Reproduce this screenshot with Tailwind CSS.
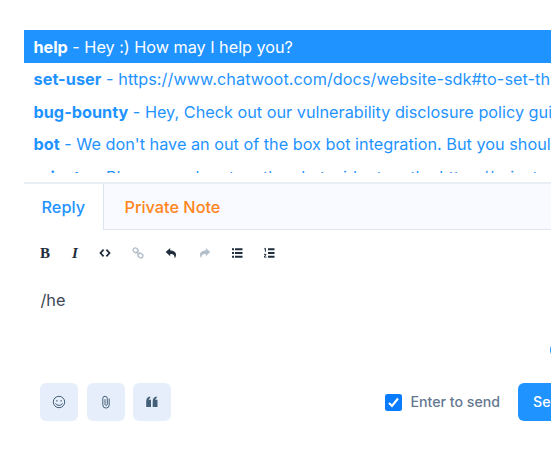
<!DOCTYPE html>
<html lang="en">
<head>
<meta charset="utf-8">
<title>Reply editor</title>
<script src="https://cdn.jsdelivr.net/npm/@tailwindcss/browser@4"></script>
</head>
<body class="bg-white w-[551px] h-[452px] overflow-hidden font-['Inter',sans-serif] text-[16.25px]">
<main class="relative ml-6 w-[527px] h-[452px] pt-[30px] flex flex-col overflow-hidden">
  <ul class="h-[143px] shrink-0 overflow-hidden whitespace-nowrap text-[#1f93ff] [font-feature-settings:'calt'_0]">
    <li class="h-[33px] pl-[9.5px] leading-[34px] bg-[#1f93ff] text-white tracking-[-0.03px]"><b class="font-bold">help</b> - Hey :) How may I help you?</li>
    <li class="h-[32.5px] pl-[9.5px] leading-[32.5px] tracking-[0.05px]"><b class="font-bold">set-user</b> - https://www.chatwoot.com/docs/website-sdk#to-set-th</li>
    <li class="h-[32.5px] pl-[9.5px] leading-[32.5px]"><b class="font-bold">bug-bounty</b> - Hey, Check out our vulnerability disclosure policy gui</li>
    <li class="h-[32.5px] pl-[9.5px] leading-[32.5px]"><b class="font-bold">bot</b> - We don't have an out of the box bot integration. But you shoul</li>
    <li class="h-[32.5px] pl-[9.5px] leading-[32.5px]"><b class="font-bold">private</b> - Please reach out on the chat widget on the https://privat</li>
  </ul>
  <nav class="mt-[9px] h-12 shrink-0 flex border-t-2 border-[#e9eff5] font-medium text-[16.3px] leading-[46px]">
    <div class="w-20 pl-[17.5px] border-r border-[#dde6ef] text-[#1f93ff]">Reply</div>
    <div class="flex-1 pl-[20.5px] bg-[#f8faff] border-b border-[#dfe6ee] text-[#ff851b]">Private Note</div>
  </nav>
  <div class="h-[46px] mb-px shrink-0 flex items-center pl-4 text-[#1f2d3d]">
    <span class="w-[32px] leading-4 font-['Liberation_Serif',serif] font-bold text-[15px]">B</span>
    <span class="w-[27px] leading-4 font-['Liberation_Serif',serif] font-bold italic text-[15px]">I</span>
    <svg class="w-3 h-3 mr-[21px]" viewBox="0 0 12 12" fill="none" stroke="currentColor" stroke-width="1.8"><path d="M4.6 2.7 1.5 6l3.1 3.3M7.4 2.7 10.5 6 7.4 9.3"/></svg>
    <svg class="w-3 h-3 mr-[21px] text-[#b4bfcc]" viewBox="0 0 12 12" fill="none" stroke="currentColor" stroke-width="1.4"><rect x="1" y="1.2" width="5.2" height="4.2" rx="2.1" transform="rotate(35 3.6 3.3)"/><rect x="5.8" y="6.4" width="5.2" height="4.2" rx="2.1" transform="rotate(35 8.4 8.5)"/><path d="m4.6 4.4 2.8 3"/></svg>
    <svg class="w-3 h-3 mr-[22px]" viewBox="0 0 12 12" fill="currentColor"><path d="M.7 5 5.200 1v2.500c3.800 0 6 1.800 5.800 4.500 0 1.400-.7 2.600-1.500 3.200.5-2.600-.8-4.100-4.300-4.100v2.100z"/></svg>
    <svg class="w-3 h-3 mr-5 text-[#b4bfcc]" viewBox="0 0 12 12" fill="currentColor"><path d="M11.3 5 6.800 1v2.500C3 3.500.8 5.300 1 8c0 1.400.7 2.600 1.500 3.200C2 8.600 3.300 7.100 6.800 7.100v2.100z"/></svg>
    <svg class="w-3 h-3 mr-5" viewBox="0 0 12 12" fill="currentColor"><path d="M1 1.200h2v2H1zM4 1.200h7.500v2H4zM1 5h2v2H1zM4 5h7.500v2H4zM1 8.700h2v2H1zM4 8.700h7.500v2H4z"/></svg>
    <svg class="w-3 h-3" viewBox="0 0 12 12" fill="currentColor"><path d="M5 1.200h6.500v2H5zM5 5h6.500v2H5zM5 8.700h6.500v2H5z"/><path d="M1.200 2 2.400 1.300v3.500M1 7.300h2L1.200 10.100h2.300" fill="none" stroke="currentColor"/></svg>
  </div>
  <div class="h-[106px] shrink-0 pl-[16.5px] pt-[13px] leading-[20px] text-[16.3px] text-[#3c4858]">/he</div>
  <footer class="flex items-center h-[38px] shrink-0 pl-4">
    <div class="flex gap-[8.5px] text-[#446078]">
      <button class="size-[38px] rounded-md bg-[#e6eefb] grid place-items-center" aria-label="Emoji"><svg class="size-[14px]" viewBox="0 0 14 14" fill="none" stroke="currentColor"><circle cx="7" cy="7" r="5.700"/><path d="M3.500 8.300c1 2.700 6 2.700 7 0M4 5.900h1.700M8.300 5.900H10"/></svg></button>
      <button class="size-[38px] rounded-md bg-[#e6eefb] grid place-items-center" aria-label="Attach"><svg class="size-[14px]" viewBox="0 0 14 14" fill="none" stroke="currentColor"><path d="M10.200 3.500v6.400a3.200 3.200 0 0 1-6.400 0V3.500a2.200 2.200 0 0 1 4.500 0v6a1.200 1.200 0 0 1-2.300 0V4.200"/></svg></button>
      <button class="size-[38px] rounded-md bg-[#e6eefb] grid place-items-center" aria-label="Canned response"><svg class="size-[14px]" viewBox="0 0 14 14" fill="currentColor"><path d="M1.200 6.500c0-3 1.300-4.700 4-5v1.700c-.9.200-1.300.7-1.400 1.500H6V12H1.200zM7.700 6.500c0-3 1.300-4.700 4-5v1.700c-.9.200-1.300.7-1.400 1.500h2.200V12H7.700z"/></svg></button>
    </div>
    <label class="ml-auto mr-[18px] flex items-center gap-[9px] text-[#647891] text-[14.15px] font-medium leading-none">
      <svg class="size-[17px]" viewBox="0 0 17 17"><rect width="17" height="17" rx="2.300" fill="#087bff"/><path d="m4 8.900 3 3 6-7.400" fill="none" stroke="#fff" stroke-width="2.100"/></svg>
      <span>Enter to send</span>
    </label>
    <button class="h-[38px] w-[33px] rounded-l-md bg-[#1f93ff] pl-[15px] text-left text-[14.15px] font-medium text-white overflow-hidden whitespace-nowrap">Send</button>
  </footer>
  <span class="absolute left-[525.500px] top-[342px] size-4 rounded-full border-2 border-[#1f93ff]"></span>
</main>
</body>
</html>
